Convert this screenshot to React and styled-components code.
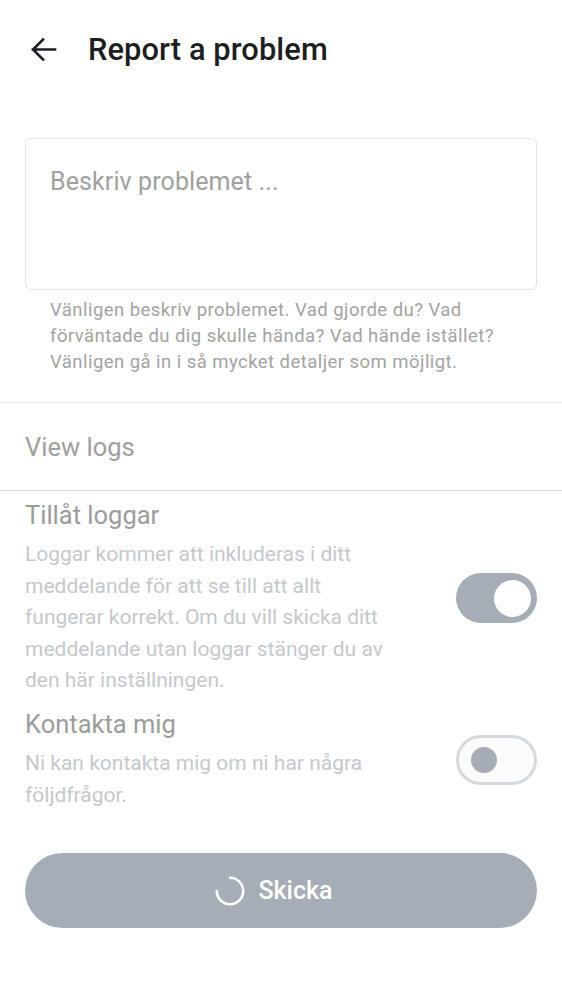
import React from "react";
import styled, { createGlobalStyle } from "styled-components";

const Global = createGlobalStyle`
  html, body { margin: 0; padding: 0; background: #ffffff; }
  body { font-family: Roboto, "Noto Sans", Arial, sans-serif; -webkit-font-smoothing: antialiased; }
  * { box-sizing: border-box; }
`;

const Page = styled.div`
  width: 562px;
  min-height: 1000px;
  background: #fff;
  display: flex;
  flex-direction: column;
`;

const Header = styled.header`
  height: 98px;
  display: flex;
  align-items: center;
  padding-left: 30px;
  gap: 31px;
`;

const BackButton = styled.button`
  width: 27px;
  height: 27px;
  padding: 0;
  border: none;
  background: none;
  display: flex;
  align-items: center;
  justify-content: center;
  color: #1d1e22;
`;

const Title = styled.h1`
  margin: 0;
  font-size: 30.8px;
  font-weight: 500;
  color: #1d1e22;
  letter-spacing: 0.1px;
`;

const Section = styled.div`
  padding: 0 25px;
`;

const TextBox = styled.div`
  margin-top: 40px;
  height: 152px;
  border: 1px solid #e3e3e3;
  border-radius: 6px;
  padding: 27px 24px;
`;

const Placeholder = styled.div`
  font-size: 25px;
  line-height: 31px;
  color: #a0a0a0;
  letter-spacing: 0.1px;
`;

const Helper = styled.p`
  margin: 7px 0 0;
  padding-left: 25px;
  padding-right: 10px;
  font-size: 18.5px;
  line-height: 26px;
  color: #a3a3a3;
  letter-spacing: 0.45px;
`;

const Spacer = styled.div`
  height: ${(p) => p.$h}px;
`;

const Divider = styled.div`
  height: 1px;
  background: ${(p) => p.$color};
`;

const LinkRow = styled.div`
  height: 87px;
  display: flex;
  align-items: center;
  padding: 0 25px;
  font-size: 25.5px;
  color: #a0a0a0;
`;

const Settings = styled.div`
  padding: 9px 25px 0;
  display: flex;
  flex-direction: column;
  gap: 12px;
`;

const SettingRow = styled.div`
  display: flex;
  align-items: center;
  justify-content: space-between;
`;

const SettingText = styled.div`
  width: 375px;
  display: flex;
  flex-direction: column;
  gap: 8px;
`;

const SettingTitle = styled.div`
  font-size: 25.5px;
  line-height: 31px;
  color: #9c9c9c;
`;

const SettingDesc = styled.div`
  font-size: 21px;
  line-height: 31.6px;
  color: #c5c8cd;
`;

const Toggle = styled.div`
  width: 81px;
  height: 50px;
  border-radius: 25px;
  flex-shrink: 0;
  display: flex;
  align-items: center;
  justify-content: ${(p) => (p.$on ? "flex-end" : "flex-start")};
  padding: ${(p) => (p.$on ? "0 6px" : "0 12px")};
  background: ${(p) => (p.$on ? "#a7adb6" : "#fbfbfc")};
  border: ${(p) => (p.$on ? "none" : "3px solid #d4d9df")};
`;

const Thumb = styled.div`
  width: ${(p) => (p.$on ? "37px" : "26px")};
  height: ${(p) => (p.$on ? "37px" : "26px")};
  border-radius: 50%;
  background: ${(p) => (p.$on ? "#ffffff" : "#a6acb5")};
`;

const SubmitButton = styled.button`
  margin: 42px 25px 0;
  height: 75px;
  border: none;
  border-radius: 38px;
  background: #a7adb6;
  color: #fff;
  font-family: Roboto, "Noto Sans", Arial, sans-serif;
  font-size: 25px;
  font-weight: 500;
  display: flex;
  align-items: center;
  justify-content: center;
  gap: 13px;
  padding: 0 14px 0 0;
`;

const Spinner = () => (
  <svg width="30" height="30" viewBox="0 0 30 30">
    <path
      d="M15 1.8 A13.2 13.2 0 1 1 1.8 15"
      fill="none"
      stroke="#ffffff"
      strokeWidth="2.6"
      strokeLinecap="round"
    />
  </svg>
);

export default function App() {
  return (
    <Page>
      <Global />
      <Header>
        <BackButton aria-label="Back">
          <svg width="27" height="27" viewBox="0 0 27 27">
            <path
              d="M25 13.5 H3 M13 3.5 L3 13.5 L13 23.5"
              fill="none"
              stroke="#1d1e22"
              strokeWidth="2.6"
              strokeLinecap="square"
            />
          </svg>
        </BackButton>
        <Title>Report a problem</Title>
      </Header>
      <Section>
        <TextBox>
          <Placeholder>Beskriv problemet ...</Placeholder>
        </TextBox>
        <Helper>
          Vänligen beskriv problemet. Vad gjorde du? Vad förväntade du dig skulle hända? Vad hände istället? Vänligen gå in i så mycket detaljer som möjligt.
        </Helper>
      </Section>
      <Spacer $h={27} />
      <Divider $color="#eceef1" />
      <LinkRow>View logs</LinkRow>
      <Divider $color="#d6dbe1" />
      <Settings>
        <SettingRow>
          <SettingText>
            <SettingTitle>Tillåt loggar</SettingTitle>
            <SettingDesc>
              Loggar kommer att inkluderas i ditt meddelande för att se till att allt fungerar korrekt. Om du vill skicka ditt meddelande utan loggar stänger du av den här inställningen.
            </SettingDesc>
          </SettingText>
          <Toggle $on>
            <Thumb $on />
          </Toggle>
        </SettingRow>
        <SettingRow>
          <SettingText>
            <SettingTitle>Kontakta mig</SettingTitle>
            <SettingDesc>Ni kan kontakta mig om ni har några följdfrågor.</SettingDesc>
          </SettingText>
          <Toggle>
            <Thumb />
          </Toggle>
        </SettingRow>
      </Settings>
      <SubmitButton>
        <Spinner />
        Skicka
      </SubmitButton>
    </Page>
  );
}
